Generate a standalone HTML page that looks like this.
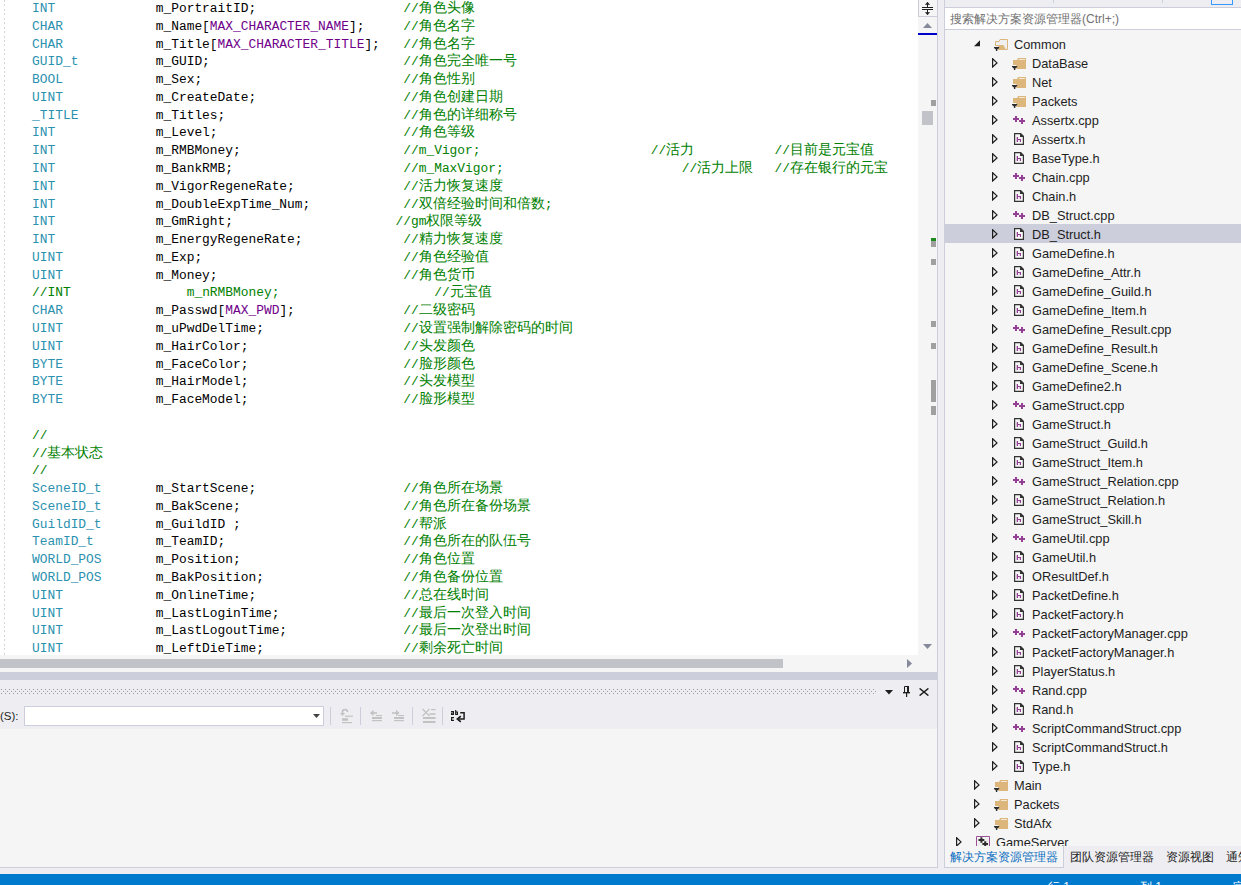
<!DOCTYPE html>
<html><head><meta charset="utf-8">
<style>
*{margin:0;padding:0;box-sizing:border-box}
html,body{width:1241px;height:885px;overflow:hidden;background:#EEEEF2;position:relative;font-family:"Liberation Sans",sans-serif}
.abs{position:absolute}
#editor{position:absolute;left:0;top:0;width:918px;height:655px;background:#fff;overflow:hidden}
#guide{position:absolute;left:4px;top:0;width:1px;height:655px;background:repeating-linear-gradient(to bottom,#D4D4D4 0,#D4D4D4 2px,transparent 2px,transparent 4.44px)}
.ln{position:absolute;left:0;height:0;width:918px}
.s{position:absolute;bottom:0;white-space:pre;font-family:"Liberation Mono",monospace;font-size:12.89px;line-height:0;color:#000}
.s i{font-style:normal}
.s b{font-weight:normal;font-size:14px}
.ic{position:absolute;display:block}
.tn{position:absolute;font-size:12.8px;line-height:20px;height:20px;white-space:pre;color:#1E1E1E}
</style></head><body>
<div id="editor">
<div id="guide"></div>
<div class="ln" style="top:9.00px"><span class="s" style="left:32.00px"><i style="color:#2B91AF">INT</i></span><span class="s" style="left:155.76px">m_PortraitID;</span><span class="s" style="left:403.28px"><i style="color:#008000">//<b>角色头像</b></i></span></div>
<div class="ln" style="top:26.78px"><span class="s" style="left:32.00px"><i style="color:#2B91AF">CHAR</i></span><span class="s" style="left:155.76px">m_Name[<i style="color:#6F008A">MAX_CHARACTER_NAME</i>];</span><span class="s" style="left:403.28px"><i style="color:#008000">//<b>角色名字</b></i></span></div>
<div class="ln" style="top:44.56px"><span class="s" style="left:32.00px"><i style="color:#2B91AF">CHAR</i></span><span class="s" style="left:155.76px">m_Title[<i style="color:#6F008A">MAX_CHARACTER_TITLE</i>];</span><span class="s" style="left:403.28px"><i style="color:#008000">//<b>角色名字</b></i></span></div>
<div class="ln" style="top:62.34px"><span class="s" style="left:32.00px"><i style="color:#2B91AF">GUID_t</i></span><span class="s" style="left:155.76px">m_GUID;</span><span class="s" style="left:403.28px"><i style="color:#008000">//<b>角色完全唯一号</b></i></span></div>
<div class="ln" style="top:80.12px"><span class="s" style="left:32.00px"><i style="color:#2B91AF">BOOL</i></span><span class="s" style="left:155.76px">m_Sex;</span><span class="s" style="left:403.28px"><i style="color:#008000">//<b>角色性别</b></i></span></div>
<div class="ln" style="top:97.90px"><span class="s" style="left:32.00px"><i style="color:#2B91AF">UINT</i></span><span class="s" style="left:155.76px">m_CreateDate;</span><span class="s" style="left:403.28px"><i style="color:#008000">//<b>角色创建日期</b></i></span></div>
<div class="ln" style="top:115.68px"><span class="s" style="left:32.00px"><i style="color:#2B91AF">_TITLE</i></span><span class="s" style="left:155.76px">m_Titles;</span><span class="s" style="left:403.28px"><i style="color:#008000">//<b>角色的详细称号</b></i></span></div>
<div class="ln" style="top:133.46px"><span class="s" style="left:32.00px"><i style="color:#2B91AF">INT</i></span><span class="s" style="left:155.76px">m_Level;</span><span class="s" style="left:403.28px"><i style="color:#008000">//<b>角色等级</b></i></span></div>
<div class="ln" style="top:151.24px"><span class="s" style="left:32.00px"><i style="color:#2B91AF">INT</i></span><span class="s" style="left:155.76px">m_RMBMoney;</span><span class="s" style="left:403.28px"><i style="color:#008000">//m_Vigor;</i></span><span class="s" style="left:650.80px"><i style="color:#008000">//<b>活力</b></i></span><span class="s" style="left:774.56px"><i style="color:#008000">//<b>目前是元宝值</b></i></span></div>
<div class="ln" style="top:169.02px"><span class="s" style="left:32.00px"><i style="color:#2B91AF">INT</i></span><span class="s" style="left:155.76px">m_BankRMB;</span><span class="s" style="left:403.28px"><i style="color:#008000">//m_MaxVigor;</i></span><span class="s" style="left:681.74px"><i style="color:#008000">//<b>活力上限</b></i></span><span class="s" style="left:774.56px"><i style="color:#008000">//<b>存在银行的元宝</b></i></span></div>
<div class="ln" style="top:186.80px"><span class="s" style="left:32.00px"><i style="color:#2B91AF">INT</i></span><span class="s" style="left:155.76px">m_VigorRegeneRate;</span><span class="s" style="left:403.28px"><i style="color:#008000">//<b>活力恢复速度</b></i></span></div>
<div class="ln" style="top:204.58px"><span class="s" style="left:32.00px"><i style="color:#2B91AF">INT</i></span><span class="s" style="left:155.76px">m_DoubleExpTime_Num;</span><span class="s" style="left:403.28px"><i style="color:#008000">//<b>双倍经验时间和倍数</b>;</i></span></div>
<div class="ln" style="top:222.36px"><span class="s" style="left:32.00px"><i style="color:#2B91AF">INT</i></span><span class="s" style="left:155.76px">m_GmRight;</span><span class="s" style="left:395.55px"><i style="color:#008000">//gm<b>权限等级</b></i></span></div>
<div class="ln" style="top:240.14px"><span class="s" style="left:32.00px"><i style="color:#2B91AF">INT</i></span><span class="s" style="left:155.76px">m_EnergyRegeneRate;</span><span class="s" style="left:403.28px"><i style="color:#008000">//<b>精力恢复速度</b></i></span></div>
<div class="ln" style="top:257.92px"><span class="s" style="left:32.00px"><i style="color:#2B91AF">UINT</i></span><span class="s" style="left:155.76px">m_Exp;</span><span class="s" style="left:403.28px"><i style="color:#008000">//<b>角色经验值</b></i></span></div>
<div class="ln" style="top:275.70px"><span class="s" style="left:32.00px"><i style="color:#2B91AF">UINT</i></span><span class="s" style="left:155.76px">m_Money;</span><span class="s" style="left:403.28px"><i style="color:#008000">//<b>角色货币</b></i></span></div>
<div class="ln" style="top:293.48px"><span class="s" style="left:32.00px"><i style="color:#008000">//INT</i></span><span class="s" style="left:186.70px"><i style="color:#008000">m_nRMBMoney;</i></span><span class="s" style="left:434.22px"><i style="color:#008000">//<b>元宝值</b></i></span></div>
<div class="ln" style="top:311.26px"><span class="s" style="left:32.00px"><i style="color:#2B91AF">CHAR</i></span><span class="s" style="left:155.76px">m_Passwd[<i style="color:#6F008A">MAX_PWD</i>];</span><span class="s" style="left:403.28px"><i style="color:#008000">//<b>二级密码</b></i></span></div>
<div class="ln" style="top:329.04px"><span class="s" style="left:32.00px"><i style="color:#2B91AF">UINT</i></span><span class="s" style="left:155.76px">m_uPwdDelTime;</span><span class="s" style="left:403.28px"><i style="color:#008000">//<b>设置强制解除密码的时间</b></i></span></div>
<div class="ln" style="top:346.82px"><span class="s" style="left:32.00px"><i style="color:#2B91AF">UINT</i></span><span class="s" style="left:155.76px">m_HairColor;</span><span class="s" style="left:403.28px"><i style="color:#008000">//<b>头发颜色</b></i></span></div>
<div class="ln" style="top:364.60px"><span class="s" style="left:32.00px"><i style="color:#2B91AF">BYTE</i></span><span class="s" style="left:155.76px">m_FaceColor;</span><span class="s" style="left:403.28px"><i style="color:#008000">//<b>脸形颜色</b></i></span></div>
<div class="ln" style="top:382.38px"><span class="s" style="left:32.00px"><i style="color:#2B91AF">BYTE</i></span><span class="s" style="left:155.76px">m_HairModel;</span><span class="s" style="left:403.28px"><i style="color:#008000">//<b>头发模型</b></i></span></div>
<div class="ln" style="top:400.16px"><span class="s" style="left:32.00px"><i style="color:#2B91AF">BYTE</i></span><span class="s" style="left:155.76px">m_FaceModel;</span><span class="s" style="left:403.28px"><i style="color:#008000">//<b>脸形模型</b></i></span></div>
<div class="ln" style="top:417.94px"></div>
<div class="ln" style="top:435.72px"><span class="s" style="left:32.00px"><i style="color:#008000">//</i></span></div>
<div class="ln" style="top:453.50px"><span class="s" style="left:32.00px"><i style="color:#008000">//<b>基本状态</b></i></span></div>
<div class="ln" style="top:471.28px"><span class="s" style="left:32.00px"><i style="color:#008000">//</i></span></div>
<div class="ln" style="top:489.06px"><span class="s" style="left:32.00px"><i style="color:#2B91AF">SceneID_t</i></span><span class="s" style="left:155.76px">m_StartScene;</span><span class="s" style="left:403.28px"><i style="color:#008000">//<b>角色所在场景</b></i></span></div>
<div class="ln" style="top:506.84px"><span class="s" style="left:32.00px"><i style="color:#2B91AF">SceneID_t</i></span><span class="s" style="left:155.76px">m_BakScene;</span><span class="s" style="left:403.28px"><i style="color:#008000">//<b>角色所在备份场景</b></i></span></div>
<div class="ln" style="top:524.62px"><span class="s" style="left:32.00px"><i style="color:#2B91AF">GuildID_t</i></span><span class="s" style="left:155.76px">m_GuildID ;</span><span class="s" style="left:403.28px"><i style="color:#008000">//<b>帮派</b></i></span></div>
<div class="ln" style="top:542.40px"><span class="s" style="left:32.00px"><i style="color:#2B91AF">TeamID_t</i></span><span class="s" style="left:155.76px">m_TeamID;</span><span class="s" style="left:403.28px"><i style="color:#008000">//<b>角色所在的队伍号</b></i></span></div>
<div class="ln" style="top:560.18px"><span class="s" style="left:32.00px"><i style="color:#2B91AF">WORLD_POS</i></span><span class="s" style="left:155.76px">m_Position;</span><span class="s" style="left:403.28px"><i style="color:#008000">//<b>角色位置</b></i></span></div>
<div class="ln" style="top:577.96px"><span class="s" style="left:32.00px"><i style="color:#2B91AF">WORLD_POS</i></span><span class="s" style="left:155.76px">m_BakPosition;</span><span class="s" style="left:403.28px"><i style="color:#008000">//<b>角色备份位置</b></i></span></div>
<div class="ln" style="top:595.74px"><span class="s" style="left:32.00px"><i style="color:#2B91AF">UINT</i></span><span class="s" style="left:155.76px">m_OnlineTime;</span><span class="s" style="left:403.28px"><i style="color:#008000">//<b>总在线时间</b></i></span></div>
<div class="ln" style="top:613.52px"><span class="s" style="left:32.00px"><i style="color:#2B91AF">UINT</i></span><span class="s" style="left:155.76px">m_LastLoginTime;</span><span class="s" style="left:403.28px"><i style="color:#008000">//<b>最后一次登入时间</b></i></span></div>
<div class="ln" style="top:631.30px"><span class="s" style="left:32.00px"><i style="color:#2B91AF">UINT</i></span><span class="s" style="left:155.76px">m_LastLogoutTime;</span><span class="s" style="left:403.28px"><i style="color:#008000">//<b>最后一次登出时间</b></i></span></div>
<div class="ln" style="top:649.08px"><span class="s" style="left:32.00px"><i style="color:#2B91AF">UINT</i></span><span class="s" style="left:155.76px">m_LeftDieTime;</span><span class="s" style="left:403.28px"><i style="color:#008000">//<b>剩余死亡时间</b></i></span></div>
</div>
<!-- vertical scrollbar column -->
<div class="abs" style="left:918px;top:0;width:19px;height:672px;background:#F5F5F5"></div>
<div class="abs" style="left:937px;top:0;width:1px;height:868px;background:#CCCEDB"></div>
<div class="abs" style="left:918px;top:0;width:19px;height:17px;border-left:1px solid #CCCEDB;border-bottom:1px solid #CCCEDB;background:#F5F5F5"></div>
<svg class="ic" style="left:921px;top:1px" width="13" height="15" viewBox="0 0 13 15"><path d="M1 6.5h11M1 8.5h11" stroke="#1E1E1E" stroke-width="1"/><path d="M6.5 1.5v5M6.5 8.5v5" stroke="#1E1E1E" stroke-width="1"/><path d="M4.5 3.5L6.5 1.2L8.5 3.5z M4.5 11.5L6.5 13.8L8.5 11.5z" fill="#1E1E1E" stroke="#1E1E1E" stroke-width="0.6"/></svg>
<svg class="ic" style="left:923px;top:23px" width="9" height="5" viewBox="0 0 9 5"><path d="M0 5L4.5 0L9 5z" fill="#868999"/></svg>
<div class="abs" style="left:918px;top:33px;width:19px;height:2px;background:#0000CD"></div>
<!-- marks -->
<div class="abs" style="left:931px;top:100px;width:5px;height:6px;background:#A0A0A0"></div>
<div class="abs" style="left:922px;top:111px;width:11px;height:14px;background:#C2C3C9"></div>
<div class="abs" style="left:931px;top:238px;width:5px;height:3px;background:#1D8A1D"></div>
<div class="abs" style="left:931px;top:241px;width:5px;height:6px;background:#A0A0A0"></div>
<div class="abs" style="left:931px;top:259px;width:5px;height:6px;background:#A0A0A0"></div>
<div class="abs" style="left:931px;top:321px;width:5px;height:6px;background:#A0A0A0"></div>
<div class="abs" style="left:931px;top:343px;width:5px;height:6px;background:#A0A0A0"></div>
<div class="abs" style="left:931px;top:380px;width:5px;height:22px;background:#A0A0A0"></div>
<div class="abs" style="left:931px;top:406px;width:5px;height:9px;background:#A0A0A0"></div>
<svg class="ic" style="left:923px;top:644px" width="9" height="5" viewBox="0 0 9 5"><path d="M0 0H9L4.5 5z" fill="#868999"/></svg>
<!-- horizontal scrollbar -->
<div class="abs" style="left:0;top:655px;width:918px;height:17px;background:#F5F5F5"></div>
<div class="abs" style="left:0;top:659px;width:783px;height:9px;background:#C2C3C9"></div>
<svg class="ic" style="left:907px;top:659px" width="5" height="9" viewBox="0 0 5 9"><path d="M0 0L5 4.5L0 9z" fill="#868999"/></svg>
<!-- output window -->
<div class="abs" style="left:0;top:672px;width:937px;height:8px;background:#CCCEDB"></div>
<div class="abs" style="left:0;top:680px;width:937px;height:49px;background:#EEEEF2"></div>
<svg class="ic" style="left:0;top:689px" width="876" height="5"><defs><pattern id="dp" width="4" height="4" patternUnits="userSpaceOnUse"><rect x="1" y="0" width="1" height="1" fill="#999"/><rect x="3" y="2" width="1" height="1" fill="#999"/></pattern></defs><rect width="876" height="5" fill="url(#dp)"/></svg>
<svg class="ic" style="left:885px;top:690px" width="8" height="5" viewBox="0 0 8 5"><path d="M0 0H8L4 4.5z" fill="#1E1E1E"/></svg>
<svg class="ic" style="left:903px;top:686px" width="8" height="11" viewBox="0 0 8 11"><path d="M1.5 0.5H5.5M1.5 0.5V6.5" fill="none" stroke="#1E1E1E" stroke-width="1"/><rect x="4" y="0" width="2" height="6.5" fill="#1E1E1E"/><rect x="0" y="6" width="7" height="1.4" fill="#1E1E1E"/><rect x="3" y="7" width="1.2" height="4" fill="#1E1E1E"/></svg>
<svg class="ic" style="left:919px;top:688px" width="10" height="8" viewBox="0 0 10 8"><path d="M0.6 0.4L9.4 7.6M9.4 0.4L0.6 7.6" stroke="#1E1E1E" stroke-width="1.4"/></svg>
<div class="abs" style="left:0;top:708px;font-size:11.5px;line-height:16px;color:#1E1E1E">(S):</div>
<div class="abs" style="left:24px;top:706px;width:300px;height:20px;background:#fff;border:1px solid #CCCEDB"></div>
<svg class="ic" style="left:313px;top:714px" width="7" height="4" viewBox="0 0 7 4"><path d="M0 0H7L3.5 4z" fill="#424242"/></svg>
<div class="abs" style="left:330px;top:707px;width:1px;height:18px;background:#CCCEDB"></div>
<div class="abs" style="left:360px;top:707px;width:1px;height:18px;background:#CCCEDB"></div>
<div class="abs" style="left:412px;top:707px;width:1px;height:18px;background:#CCCEDB"></div>
<div class="abs" style="left:442px;top:707px;width:1px;height:18px;background:#CCCEDB"></div>
<svg class="ic" style="left:336px;top:704px" width="20" height="22" viewBox="0 0 20 22"><path d="M6.5 9.5V8a2.5 2.5 0 0 1 5 0" fill="none" stroke="#C2C2C2" stroke-width="1.6"/><path d="M4 9L6.5 12L9 9Z" fill="#C2C2C2"/><rect x="9" y="11.6" width="8" height="1.2" fill="#C2C2C2"/><rect x="6" y="14.2" width="6" height="2.6" fill="#C2C2C2"/><rect x="6" y="18" width="10" height="1.2" fill="#C2C2C2"/></svg><svg class="ic" style="left:369px;top:709px" width="14" height="13" viewBox="0 0 14 13"><path d="M1 4L4.5 0.8V7.2Z" fill="#C2C2C2"/><rect x="3" y="3.2" width="5" height="1.6" fill="#C2C2C2"/><rect x="7" y="6" width="6" height="1.1" fill="#C2C2C2"/><rect x="3" y="8" width="10" height="2" fill="#C2C2C2"/><rect x="3" y="11" width="10" height="1.2" fill="#C2C2C2"/></svg><svg class="ic" style="left:391px;top:709px" width="14" height="13" viewBox="0 0 14 13"><path d="M8.5 4L5 0.8V7.2Z" fill="#C2C2C2"/><rect x="1" y="3.2" width="5" height="1.6" fill="#C2C2C2"/><rect x="7" y="6" width="6" height="1.1" fill="#C2C2C2"/><rect x="3" y="8" width="10" height="2" fill="#C2C2C2"/><rect x="3" y="11" width="10" height="1.2" fill="#C2C2C2"/></svg><svg class="ic" style="left:422px;top:708px" width="14" height="16" viewBox="0 0 14 16"><path d="M0.5 1L7.5 8M7.5 1L0.5 8" stroke="#C2C2C2" stroke-width="1.2"/><rect x="9" y="1" width="4.5" height="1.2" fill="#C2C2C2"/><rect x="7.5" y="5.2" width="6" height="1.6" fill="#C2C2C2"/><rect x="1" y="9" width="12.5" height="2" fill="#C2C2C2"/><rect x="1" y="13" width="12.5" height="2" fill="#C2C2C2"/></svg><svg class="ic" style="left:450px;top:709px" width="17" height="14" viewBox="0 0 17 14"><path d="M1 2.5H3.4V5.5H1.6V4H3.4" fill="none" stroke="#1E1E1E" stroke-width="1.2"/><path d="M5.7 1V5.5H7.4V3H5.7" fill="none" stroke="#1E1E1E" stroke-width="1.2"/><path d="M4 8.6H1.6V11.4H4" fill="none" stroke="#1E1E1E" stroke-width="1.2"/><path d="M10.2 3.7H14.1V10H9" fill="none" stroke="#1E1E1E" stroke-width="1.5"/><path d="M10.8 7.2L7.4 10L10.8 12.8" fill="none" stroke="#1E1E1E" stroke-width="1.7"/></svg>
<div class="abs" style="left:0;top:729px;width:937px;height:139px;background:#F5F5F5;border-bottom:1px solid #CCCEDB"></div>
<!-- status bar -->
<div class="abs" style="left:0;top:874px;width:1241px;height:11px;background:#007ACC;overflow:hidden">
<div class="abs" style="left:1048px;top:6px;font-size:12px;line-height:14px;color:#fff;white-space:pre">行 1</div>
<div class="abs" style="left:1140px;top:6px;font-size:12px;line-height:14px;color:#fff;white-space:pre">列 1</div>
<div class="abs" style="left:1233px;top:6px;font-size:12px;line-height:14px;color:#fff;white-space:pre">字符 1</div>
</div>
<!-- solution explorer -->
<div class="abs" style="left:944px;top:0;width:297px;height:868px;background:#F5F5F5;border-left:1px solid #CCCEDB;overflow:hidden">
<div class="abs" style="left:0;top:0;width:297px;height:7px;background:#EEEEF2"></div>
<div class="abs" style="left:108px;top:0;width:1px;height:3px;background:#CCCEDB"></div>
<div class="abs" style="left:217px;top:0;width:1px;height:3px;background:#CCCEDB"></div>
<div class="abs" style="left:266px;top:-2px;width:22px;height:7px;border:1px solid #3399FF;background:#EEEEF2"></div>
<div class="abs" style="left:0;top:7px;width:297px;height:23px;background:#fff;border-top:1px solid #CCCEDB;border-bottom:1px solid #CCCEDB"></div>
<div class="abs" style="left:5px;top:11px;font-size:12px;line-height:17px;color:#717171;white-space:pre">搜索解决方案资源管理器(Ctrl+;)</div>
</div>
<div class="abs" style="left:945px;top:30px;width:296px;height:816px;overflow:hidden">
<div class="abs" style="left:-945px;top:-30px;width:1241px;height:885px">
<svg class="ic" style="left:974px;top:40px" width="7" height="7" viewBox="0 0 7 7"><path d="M6 0.3V6.3H0z" fill="#1E1E1E"/></svg>
<svg class="ic" style="left:994px;top:38px" width="15" height="14" viewBox="0 0 15 14"><path d="M1.5 7.5V3.5H5L6 1.5H13.5V11.5H4" fill="#EFEFEF" stroke="#DCB67A" stroke-width="1"/><path d="M1 7H9.5L12 12H4.3V8H1Z" fill="#DCB67A"/><path d="M0 9H5.2V10L3.3 11.6V13H1.9V11.6L0 10Z" fill="#2D2D2D"/></svg>
<div class="tn" style="left:1014px;top:35px">Common</div>
<svg class="ic" style="left:992px;top:58px" width="6" height="10" viewBox="0 0 6 10"><path d="M0.6 0.8L5 4.9L0.6 9z" fill="none" stroke="#1E1E1E" stroke-width="1.2"/></svg>
<svg class="ic" style="left:1012px;top:57px" width="15" height="13" viewBox="0 0 15 13"><path d="M1 3H5.2L6 1H14V12H4.3V8H1Z" fill="#DCB67A"/><path d="M7 2H13V3H7Z" fill="#F3E9D6"/><path d="M0 9H5.2V10L3.3 11.6V13H1.9V11.6L0 10Z" fill="#2D2D2D"/></svg>
<div class="tn" style="left:1032px;top:54px">DataBase</div>
<svg class="ic" style="left:992px;top:77px" width="6" height="10" viewBox="0 0 6 10"><path d="M0.6 0.8L5 4.9L0.6 9z" fill="none" stroke="#1E1E1E" stroke-width="1.2"/></svg>
<svg class="ic" style="left:1012px;top:76px" width="15" height="13" viewBox="0 0 15 13"><path d="M1 3H5.2L6 1H14V12H4.3V8H1Z" fill="#DCB67A"/><path d="M7 2H13V3H7Z" fill="#F3E9D6"/><path d="M0 9H5.2V10L3.3 11.6V13H1.9V11.6L0 10Z" fill="#2D2D2D"/></svg>
<div class="tn" style="left:1032px;top:73px">Net</div>
<svg class="ic" style="left:992px;top:96px" width="6" height="10" viewBox="0 0 6 10"><path d="M0.6 0.8L5 4.9L0.6 9z" fill="none" stroke="#1E1E1E" stroke-width="1.2"/></svg>
<svg class="ic" style="left:1012px;top:95px" width="15" height="13" viewBox="0 0 15 13"><path d="M1 3H5.2L6 1H14V12H4.3V8H1Z" fill="#DCB67A"/><path d="M7 2H13V3H7Z" fill="#F3E9D6"/><path d="M0 9H5.2V10L3.3 11.6V13H1.9V11.6L0 10Z" fill="#2D2D2D"/></svg>
<div class="tn" style="left:1032px;top:92px">Packets</div>
<svg class="ic" style="left:992px;top:115px" width="6" height="10" viewBox="0 0 6 10"><path d="M0.6 0.8L5 4.9L0.6 9z" fill="none" stroke="#1E1E1E" stroke-width="1.2"/></svg>
<svg class="ic" style="left:1013px;top:116px" width="13" height="9" viewBox="0 0 13 9"><path d="M2 0H4V2H6V4H4V6H2V4H0V2H2Z" fill="#943F93"/><path d="M8 2H10V4H12V6H10V8H8V6H6V4H8Z" fill="#943F93"/></svg>
<div class="tn" style="left:1032px;top:111px">Assertx.cpp</div>
<svg class="ic" style="left:992px;top:134px" width="6" height="10" viewBox="0 0 6 10"><path d="M0.6 0.8L5 4.9L0.6 9z" fill="none" stroke="#1E1E1E" stroke-width="1.2"/></svg>
<svg class="ic" style="left:1014px;top:133px" width="10" height="12" viewBox="0 0 10 12"><path d="M0.6 0.6H6.4L9.4 3.6V11.4H0.6Z" fill="#F5F5F5" stroke="#333" stroke-width="1.2"/><path d="M6 0H6.8L10 3.2V4H6Z" fill="#333"/><path d="M2.7 4H4V5.9H7V9H5.8V7H4V9H2.7Z" fill="#943F93"/></svg>
<div class="tn" style="left:1032px;top:130px">Assertx.h</div>
<svg class="ic" style="left:992px;top:153px" width="6" height="10" viewBox="0 0 6 10"><path d="M0.6 0.8L5 4.9L0.6 9z" fill="none" stroke="#1E1E1E" stroke-width="1.2"/></svg>
<svg class="ic" style="left:1014px;top:152px" width="10" height="12" viewBox="0 0 10 12"><path d="M0.6 0.6H6.4L9.4 3.6V11.4H0.6Z" fill="#F5F5F5" stroke="#333" stroke-width="1.2"/><path d="M6 0H6.8L10 3.2V4H6Z" fill="#333"/><path d="M2.7 4H4V5.9H7V9H5.8V7H4V9H2.7Z" fill="#943F93"/></svg>
<div class="tn" style="left:1032px;top:149px">BaseType.h</div>
<svg class="ic" style="left:992px;top:172px" width="6" height="10" viewBox="0 0 6 10"><path d="M0.6 0.8L5 4.9L0.6 9z" fill="none" stroke="#1E1E1E" stroke-width="1.2"/></svg>
<svg class="ic" style="left:1013px;top:173px" width="13" height="9" viewBox="0 0 13 9"><path d="M2 0H4V2H6V4H4V6H2V4H0V2H2Z" fill="#943F93"/><path d="M8 2H10V4H12V6H10V8H8V6H6V4H8Z" fill="#943F93"/></svg>
<div class="tn" style="left:1032px;top:168px">Chain.cpp</div>
<svg class="ic" style="left:992px;top:191px" width="6" height="10" viewBox="0 0 6 10"><path d="M0.6 0.8L5 4.9L0.6 9z" fill="none" stroke="#1E1E1E" stroke-width="1.2"/></svg>
<svg class="ic" style="left:1014px;top:190px" width="10" height="12" viewBox="0 0 10 12"><path d="M0.6 0.6H6.4L9.4 3.6V11.4H0.6Z" fill="#F5F5F5" stroke="#333" stroke-width="1.2"/><path d="M6 0H6.8L10 3.2V4H6Z" fill="#333"/><path d="M2.7 4H4V5.9H7V9H5.8V7H4V9H2.7Z" fill="#943F93"/></svg>
<div class="tn" style="left:1032px;top:187px">Chain.h</div>
<svg class="ic" style="left:992px;top:210px" width="6" height="10" viewBox="0 0 6 10"><path d="M0.6 0.8L5 4.9L0.6 9z" fill="none" stroke="#1E1E1E" stroke-width="1.2"/></svg>
<svg class="ic" style="left:1013px;top:211px" width="13" height="9" viewBox="0 0 13 9"><path d="M2 0H4V2H6V4H4V6H2V4H0V2H2Z" fill="#943F93"/><path d="M8 2H10V4H12V6H10V8H8V6H6V4H8Z" fill="#943F93"/></svg>
<div class="tn" style="left:1032px;top:206px">DB_Struct.cpp</div>
<div style="position:absolute;left:945px;top:224px;width:296px;height:19px;background:#CCCEDB"></div>
<svg class="ic" style="left:992px;top:229px" width="6" height="10" viewBox="0 0 6 10"><path d="M0.6 0.8L5 4.9L0.6 9z" fill="none" stroke="#1E1E1E" stroke-width="1.2"/></svg>
<svg class="ic" style="left:1014px;top:228px" width="10" height="12" viewBox="0 0 10 12"><path d="M0.6 0.6H6.4L9.4 3.6V11.4H0.6Z" fill="#FFFFFF" stroke="#333" stroke-width="1.2"/><path d="M6 0H6.8L10 3.2V4H6Z" fill="#333"/><path d="M2.7 4H4V5.9H7V9H5.8V7H4V9H2.7Z" fill="#943F93"/></svg>
<div class="tn" style="left:1032px;top:225px">DB_Struct.h</div>
<svg class="ic" style="left:992px;top:248px" width="6" height="10" viewBox="0 0 6 10"><path d="M0.6 0.8L5 4.9L0.6 9z" fill="none" stroke="#1E1E1E" stroke-width="1.2"/></svg>
<svg class="ic" style="left:1014px;top:247px" width="10" height="12" viewBox="0 0 10 12"><path d="M0.6 0.6H6.4L9.4 3.6V11.4H0.6Z" fill="#F5F5F5" stroke="#333" stroke-width="1.2"/><path d="M6 0H6.8L10 3.2V4H6Z" fill="#333"/><path d="M2.7 4H4V5.9H7V9H5.8V7H4V9H2.7Z" fill="#943F93"/></svg>
<div class="tn" style="left:1032px;top:244px">GameDefine.h</div>
<svg class="ic" style="left:992px;top:267px" width="6" height="10" viewBox="0 0 6 10"><path d="M0.6 0.8L5 4.9L0.6 9z" fill="none" stroke="#1E1E1E" stroke-width="1.2"/></svg>
<svg class="ic" style="left:1014px;top:266px" width="10" height="12" viewBox="0 0 10 12"><path d="M0.6 0.6H6.4L9.4 3.6V11.4H0.6Z" fill="#F5F5F5" stroke="#333" stroke-width="1.2"/><path d="M6 0H6.8L10 3.2V4H6Z" fill="#333"/><path d="M2.7 4H4V5.9H7V9H5.8V7H4V9H2.7Z" fill="#943F93"/></svg>
<div class="tn" style="left:1032px;top:263px">GameDefine_Attr.h</div>
<svg class="ic" style="left:992px;top:286px" width="6" height="10" viewBox="0 0 6 10"><path d="M0.6 0.8L5 4.9L0.6 9z" fill="none" stroke="#1E1E1E" stroke-width="1.2"/></svg>
<svg class="ic" style="left:1014px;top:285px" width="10" height="12" viewBox="0 0 10 12"><path d="M0.6 0.6H6.4L9.4 3.6V11.4H0.6Z" fill="#F5F5F5" stroke="#333" stroke-width="1.2"/><path d="M6 0H6.8L10 3.2V4H6Z" fill="#333"/><path d="M2.7 4H4V5.9H7V9H5.8V7H4V9H2.7Z" fill="#943F93"/></svg>
<div class="tn" style="left:1032px;top:282px">GameDefine_Guild.h</div>
<svg class="ic" style="left:992px;top:305px" width="6" height="10" viewBox="0 0 6 10"><path d="M0.6 0.8L5 4.9L0.6 9z" fill="none" stroke="#1E1E1E" stroke-width="1.2"/></svg>
<svg class="ic" style="left:1014px;top:304px" width="10" height="12" viewBox="0 0 10 12"><path d="M0.6 0.6H6.4L9.4 3.6V11.4H0.6Z" fill="#F5F5F5" stroke="#333" stroke-width="1.2"/><path d="M6 0H6.8L10 3.2V4H6Z" fill="#333"/><path d="M2.7 4H4V5.9H7V9H5.8V7H4V9H2.7Z" fill="#943F93"/></svg>
<div class="tn" style="left:1032px;top:301px">GameDefine_Item.h</div>
<svg class="ic" style="left:992px;top:324px" width="6" height="10" viewBox="0 0 6 10"><path d="M0.6 0.8L5 4.9L0.6 9z" fill="none" stroke="#1E1E1E" stroke-width="1.2"/></svg>
<svg class="ic" style="left:1013px;top:325px" width="13" height="9" viewBox="0 0 13 9"><path d="M2 0H4V2H6V4H4V6H2V4H0V2H2Z" fill="#943F93"/><path d="M8 2H10V4H12V6H10V8H8V6H6V4H8Z" fill="#943F93"/></svg>
<div class="tn" style="left:1032px;top:320px">GameDefine_Result.cpp</div>
<svg class="ic" style="left:992px;top:343px" width="6" height="10" viewBox="0 0 6 10"><path d="M0.6 0.8L5 4.9L0.6 9z" fill="none" stroke="#1E1E1E" stroke-width="1.2"/></svg>
<svg class="ic" style="left:1014px;top:342px" width="10" height="12" viewBox="0 0 10 12"><path d="M0.6 0.6H6.4L9.4 3.6V11.4H0.6Z" fill="#F5F5F5" stroke="#333" stroke-width="1.2"/><path d="M6 0H6.8L10 3.2V4H6Z" fill="#333"/><path d="M2.7 4H4V5.9H7V9H5.8V7H4V9H2.7Z" fill="#943F93"/></svg>
<div class="tn" style="left:1032px;top:339px">GameDefine_Result.h</div>
<svg class="ic" style="left:992px;top:362px" width="6" height="10" viewBox="0 0 6 10"><path d="M0.6 0.8L5 4.9L0.6 9z" fill="none" stroke="#1E1E1E" stroke-width="1.2"/></svg>
<svg class="ic" style="left:1014px;top:361px" width="10" height="12" viewBox="0 0 10 12"><path d="M0.6 0.6H6.4L9.4 3.6V11.4H0.6Z" fill="#F5F5F5" stroke="#333" stroke-width="1.2"/><path d="M6 0H6.8L10 3.2V4H6Z" fill="#333"/><path d="M2.7 4H4V5.9H7V9H5.8V7H4V9H2.7Z" fill="#943F93"/></svg>
<div class="tn" style="left:1032px;top:358px">GameDefine_Scene.h</div>
<svg class="ic" style="left:992px;top:381px" width="6" height="10" viewBox="0 0 6 10"><path d="M0.6 0.8L5 4.9L0.6 9z" fill="none" stroke="#1E1E1E" stroke-width="1.2"/></svg>
<svg class="ic" style="left:1014px;top:380px" width="10" height="12" viewBox="0 0 10 12"><path d="M0.6 0.6H6.4L9.4 3.6V11.4H0.6Z" fill="#F5F5F5" stroke="#333" stroke-width="1.2"/><path d="M6 0H6.8L10 3.2V4H6Z" fill="#333"/><path d="M2.7 4H4V5.9H7V9H5.8V7H4V9H2.7Z" fill="#943F93"/></svg>
<div class="tn" style="left:1032px;top:377px">GameDefine2.h</div>
<svg class="ic" style="left:992px;top:400px" width="6" height="10" viewBox="0 0 6 10"><path d="M0.6 0.8L5 4.9L0.6 9z" fill="none" stroke="#1E1E1E" stroke-width="1.2"/></svg>
<svg class="ic" style="left:1013px;top:401px" width="13" height="9" viewBox="0 0 13 9"><path d="M2 0H4V2H6V4H4V6H2V4H0V2H2Z" fill="#943F93"/><path d="M8 2H10V4H12V6H10V8H8V6H6V4H8Z" fill="#943F93"/></svg>
<div class="tn" style="left:1032px;top:396px">GameStruct.cpp</div>
<svg class="ic" style="left:992px;top:419px" width="6" height="10" viewBox="0 0 6 10"><path d="M0.6 0.8L5 4.9L0.6 9z" fill="none" stroke="#1E1E1E" stroke-width="1.2"/></svg>
<svg class="ic" style="left:1014px;top:418px" width="10" height="12" viewBox="0 0 10 12"><path d="M0.6 0.6H6.4L9.4 3.6V11.4H0.6Z" fill="#F5F5F5" stroke="#333" stroke-width="1.2"/><path d="M6 0H6.8L10 3.2V4H6Z" fill="#333"/><path d="M2.7 4H4V5.9H7V9H5.8V7H4V9H2.7Z" fill="#943F93"/></svg>
<div class="tn" style="left:1032px;top:415px">GameStruct.h</div>
<svg class="ic" style="left:992px;top:438px" width="6" height="10" viewBox="0 0 6 10"><path d="M0.6 0.8L5 4.9L0.6 9z" fill="none" stroke="#1E1E1E" stroke-width="1.2"/></svg>
<svg class="ic" style="left:1014px;top:437px" width="10" height="12" viewBox="0 0 10 12"><path d="M0.6 0.6H6.4L9.4 3.6V11.4H0.6Z" fill="#F5F5F5" stroke="#333" stroke-width="1.2"/><path d="M6 0H6.8L10 3.2V4H6Z" fill="#333"/><path d="M2.7 4H4V5.9H7V9H5.8V7H4V9H2.7Z" fill="#943F93"/></svg>
<div class="tn" style="left:1032px;top:434px">GameStruct_Guild.h</div>
<svg class="ic" style="left:992px;top:457px" width="6" height="10" viewBox="0 0 6 10"><path d="M0.6 0.8L5 4.9L0.6 9z" fill="none" stroke="#1E1E1E" stroke-width="1.2"/></svg>
<svg class="ic" style="left:1014px;top:456px" width="10" height="12" viewBox="0 0 10 12"><path d="M0.6 0.6H6.4L9.4 3.6V11.4H0.6Z" fill="#F5F5F5" stroke="#333" stroke-width="1.2"/><path d="M6 0H6.8L10 3.2V4H6Z" fill="#333"/><path d="M2.7 4H4V5.9H7V9H5.8V7H4V9H2.7Z" fill="#943F93"/></svg>
<div class="tn" style="left:1032px;top:453px">GameStruct_Item.h</div>
<svg class="ic" style="left:992px;top:476px" width="6" height="10" viewBox="0 0 6 10"><path d="M0.6 0.8L5 4.9L0.6 9z" fill="none" stroke="#1E1E1E" stroke-width="1.2"/></svg>
<svg class="ic" style="left:1013px;top:477px" width="13" height="9" viewBox="0 0 13 9"><path d="M2 0H4V2H6V4H4V6H2V4H0V2H2Z" fill="#943F93"/><path d="M8 2H10V4H12V6H10V8H8V6H6V4H8Z" fill="#943F93"/></svg>
<div class="tn" style="left:1032px;top:472px">GameStruct_Relation.cpp</div>
<svg class="ic" style="left:992px;top:495px" width="6" height="10" viewBox="0 0 6 10"><path d="M0.6 0.8L5 4.9L0.6 9z" fill="none" stroke="#1E1E1E" stroke-width="1.2"/></svg>
<svg class="ic" style="left:1014px;top:494px" width="10" height="12" viewBox="0 0 10 12"><path d="M0.6 0.6H6.4L9.4 3.6V11.4H0.6Z" fill="#F5F5F5" stroke="#333" stroke-width="1.2"/><path d="M6 0H6.8L10 3.2V4H6Z" fill="#333"/><path d="M2.7 4H4V5.9H7V9H5.8V7H4V9H2.7Z" fill="#943F93"/></svg>
<div class="tn" style="left:1032px;top:491px">GameStruct_Relation.h</div>
<svg class="ic" style="left:992px;top:514px" width="6" height="10" viewBox="0 0 6 10"><path d="M0.6 0.8L5 4.9L0.6 9z" fill="none" stroke="#1E1E1E" stroke-width="1.2"/></svg>
<svg class="ic" style="left:1014px;top:513px" width="10" height="12" viewBox="0 0 10 12"><path d="M0.6 0.6H6.4L9.4 3.6V11.4H0.6Z" fill="#F5F5F5" stroke="#333" stroke-width="1.2"/><path d="M6 0H6.8L10 3.2V4H6Z" fill="#333"/><path d="M2.7 4H4V5.9H7V9H5.8V7H4V9H2.7Z" fill="#943F93"/></svg>
<div class="tn" style="left:1032px;top:510px">GameStruct_Skill.h</div>
<svg class="ic" style="left:992px;top:533px" width="6" height="10" viewBox="0 0 6 10"><path d="M0.6 0.8L5 4.9L0.6 9z" fill="none" stroke="#1E1E1E" stroke-width="1.2"/></svg>
<svg class="ic" style="left:1013px;top:534px" width="13" height="9" viewBox="0 0 13 9"><path d="M2 0H4V2H6V4H4V6H2V4H0V2H2Z" fill="#943F93"/><path d="M8 2H10V4H12V6H10V8H8V6H6V4H8Z" fill="#943F93"/></svg>
<div class="tn" style="left:1032px;top:529px">GameUtil.cpp</div>
<svg class="ic" style="left:992px;top:552px" width="6" height="10" viewBox="0 0 6 10"><path d="M0.6 0.8L5 4.9L0.6 9z" fill="none" stroke="#1E1E1E" stroke-width="1.2"/></svg>
<svg class="ic" style="left:1014px;top:551px" width="10" height="12" viewBox="0 0 10 12"><path d="M0.6 0.6H6.4L9.4 3.6V11.4H0.6Z" fill="#F5F5F5" stroke="#333" stroke-width="1.2"/><path d="M6 0H6.8L10 3.2V4H6Z" fill="#333"/><path d="M2.7 4H4V5.9H7V9H5.8V7H4V9H2.7Z" fill="#943F93"/></svg>
<div class="tn" style="left:1032px;top:548px">GameUtil.h</div>
<svg class="ic" style="left:992px;top:571px" width="6" height="10" viewBox="0 0 6 10"><path d="M0.6 0.8L5 4.9L0.6 9z" fill="none" stroke="#1E1E1E" stroke-width="1.2"/></svg>
<svg class="ic" style="left:1014px;top:570px" width="10" height="12" viewBox="0 0 10 12"><path d="M0.6 0.6H6.4L9.4 3.6V11.4H0.6Z" fill="#F5F5F5" stroke="#333" stroke-width="1.2"/><path d="M6 0H6.8L10 3.2V4H6Z" fill="#333"/><path d="M2.7 4H4V5.9H7V9H5.8V7H4V9H2.7Z" fill="#943F93"/></svg>
<div class="tn" style="left:1032px;top:567px">OResultDef.h</div>
<svg class="ic" style="left:992px;top:590px" width="6" height="10" viewBox="0 0 6 10"><path d="M0.6 0.8L5 4.9L0.6 9z" fill="none" stroke="#1E1E1E" stroke-width="1.2"/></svg>
<svg class="ic" style="left:1014px;top:589px" width="10" height="12" viewBox="0 0 10 12"><path d="M0.6 0.6H6.4L9.4 3.6V11.4H0.6Z" fill="#F5F5F5" stroke="#333" stroke-width="1.2"/><path d="M6 0H6.8L10 3.2V4H6Z" fill="#333"/><path d="M2.7 4H4V5.9H7V9H5.8V7H4V9H2.7Z" fill="#943F93"/></svg>
<div class="tn" style="left:1032px;top:586px">PacketDefine.h</div>
<svg class="ic" style="left:992px;top:609px" width="6" height="10" viewBox="0 0 6 10"><path d="M0.6 0.8L5 4.9L0.6 9z" fill="none" stroke="#1E1E1E" stroke-width="1.2"/></svg>
<svg class="ic" style="left:1014px;top:608px" width="10" height="12" viewBox="0 0 10 12"><path d="M0.6 0.6H6.4L9.4 3.6V11.4H0.6Z" fill="#F5F5F5" stroke="#333" stroke-width="1.2"/><path d="M6 0H6.8L10 3.2V4H6Z" fill="#333"/><path d="M2.7 4H4V5.9H7V9H5.8V7H4V9H2.7Z" fill="#943F93"/></svg>
<div class="tn" style="left:1032px;top:605px">PacketFactory.h</div>
<svg class="ic" style="left:992px;top:628px" width="6" height="10" viewBox="0 0 6 10"><path d="M0.6 0.8L5 4.9L0.6 9z" fill="none" stroke="#1E1E1E" stroke-width="1.2"/></svg>
<svg class="ic" style="left:1013px;top:629px" width="13" height="9" viewBox="0 0 13 9"><path d="M2 0H4V2H6V4H4V6H2V4H0V2H2Z" fill="#943F93"/><path d="M8 2H10V4H12V6H10V8H8V6H6V4H8Z" fill="#943F93"/></svg>
<div class="tn" style="left:1032px;top:624px">PacketFactoryManager.cpp</div>
<svg class="ic" style="left:992px;top:647px" width="6" height="10" viewBox="0 0 6 10"><path d="M0.6 0.8L5 4.9L0.6 9z" fill="none" stroke="#1E1E1E" stroke-width="1.2"/></svg>
<svg class="ic" style="left:1014px;top:646px" width="10" height="12" viewBox="0 0 10 12"><path d="M0.6 0.6H6.4L9.4 3.6V11.4H0.6Z" fill="#F5F5F5" stroke="#333" stroke-width="1.2"/><path d="M6 0H6.8L10 3.2V4H6Z" fill="#333"/><path d="M2.7 4H4V5.9H7V9H5.8V7H4V9H2.7Z" fill="#943F93"/></svg>
<div class="tn" style="left:1032px;top:643px">PacketFactoryManager.h</div>
<svg class="ic" style="left:992px;top:666px" width="6" height="10" viewBox="0 0 6 10"><path d="M0.6 0.8L5 4.9L0.6 9z" fill="none" stroke="#1E1E1E" stroke-width="1.2"/></svg>
<svg class="ic" style="left:1014px;top:665px" width="10" height="12" viewBox="0 0 10 12"><path d="M0.6 0.6H6.4L9.4 3.6V11.4H0.6Z" fill="#F5F5F5" stroke="#333" stroke-width="1.2"/><path d="M6 0H6.8L10 3.2V4H6Z" fill="#333"/><path d="M2.7 4H4V5.9H7V9H5.8V7H4V9H2.7Z" fill="#943F93"/></svg>
<div class="tn" style="left:1032px;top:662px">PlayerStatus.h</div>
<svg class="ic" style="left:992px;top:685px" width="6" height="10" viewBox="0 0 6 10"><path d="M0.6 0.8L5 4.9L0.6 9z" fill="none" stroke="#1E1E1E" stroke-width="1.2"/></svg>
<svg class="ic" style="left:1013px;top:686px" width="13" height="9" viewBox="0 0 13 9"><path d="M2 0H4V2H6V4H4V6H2V4H0V2H2Z" fill="#943F93"/><path d="M8 2H10V4H12V6H10V8H8V6H6V4H8Z" fill="#943F93"/></svg>
<div class="tn" style="left:1032px;top:681px">Rand.cpp</div>
<svg class="ic" style="left:992px;top:704px" width="6" height="10" viewBox="0 0 6 10"><path d="M0.6 0.8L5 4.9L0.6 9z" fill="none" stroke="#1E1E1E" stroke-width="1.2"/></svg>
<svg class="ic" style="left:1014px;top:703px" width="10" height="12" viewBox="0 0 10 12"><path d="M0.6 0.6H6.4L9.4 3.6V11.4H0.6Z" fill="#F5F5F5" stroke="#333" stroke-width="1.2"/><path d="M6 0H6.8L10 3.2V4H6Z" fill="#333"/><path d="M2.7 4H4V5.9H7V9H5.8V7H4V9H2.7Z" fill="#943F93"/></svg>
<div class="tn" style="left:1032px;top:700px">Rand.h</div>
<svg class="ic" style="left:992px;top:723px" width="6" height="10" viewBox="0 0 6 10"><path d="M0.6 0.8L5 4.9L0.6 9z" fill="none" stroke="#1E1E1E" stroke-width="1.2"/></svg>
<svg class="ic" style="left:1013px;top:724px" width="13" height="9" viewBox="0 0 13 9"><path d="M2 0H4V2H6V4H4V6H2V4H0V2H2Z" fill="#943F93"/><path d="M8 2H10V4H12V6H10V8H8V6H6V4H8Z" fill="#943F93"/></svg>
<div class="tn" style="left:1032px;top:719px">ScriptCommandStruct.cpp</div>
<svg class="ic" style="left:992px;top:742px" width="6" height="10" viewBox="0 0 6 10"><path d="M0.6 0.8L5 4.9L0.6 9z" fill="none" stroke="#1E1E1E" stroke-width="1.2"/></svg>
<svg class="ic" style="left:1014px;top:741px" width="10" height="12" viewBox="0 0 10 12"><path d="M0.6 0.6H6.4L9.4 3.6V11.4H0.6Z" fill="#F5F5F5" stroke="#333" stroke-width="1.2"/><path d="M6 0H6.8L10 3.2V4H6Z" fill="#333"/><path d="M2.7 4H4V5.9H7V9H5.8V7H4V9H2.7Z" fill="#943F93"/></svg>
<div class="tn" style="left:1032px;top:738px">ScriptCommandStruct.h</div>
<svg class="ic" style="left:992px;top:761px" width="6" height="10" viewBox="0 0 6 10"><path d="M0.6 0.8L5 4.9L0.6 9z" fill="none" stroke="#1E1E1E" stroke-width="1.2"/></svg>
<svg class="ic" style="left:1014px;top:760px" width="10" height="12" viewBox="0 0 10 12"><path d="M0.6 0.6H6.4L9.4 3.6V11.4H0.6Z" fill="#F5F5F5" stroke="#333" stroke-width="1.2"/><path d="M6 0H6.8L10 3.2V4H6Z" fill="#333"/><path d="M2.7 4H4V5.9H7V9H5.8V7H4V9H2.7Z" fill="#943F93"/></svg>
<div class="tn" style="left:1032px;top:757px">Type.h</div>
<svg class="ic" style="left:974px;top:780px" width="6" height="10" viewBox="0 0 6 10"><path d="M0.6 0.8L5 4.9L0.6 9z" fill="none" stroke="#1E1E1E" stroke-width="1.2"/></svg>
<svg class="ic" style="left:994px;top:779px" width="15" height="13" viewBox="0 0 15 13"><path d="M1 3H5.2L6 1H14V12H4.3V8H1Z" fill="#DCB67A"/><path d="M7 2H13V3H7Z" fill="#F3E9D6"/><path d="M0 9H5.2V10L3.3 11.6V13H1.9V11.6L0 10Z" fill="#2D2D2D"/></svg>
<div class="tn" style="left:1014px;top:776px">Main</div>
<svg class="ic" style="left:974px;top:799px" width="6" height="10" viewBox="0 0 6 10"><path d="M0.6 0.8L5 4.9L0.6 9z" fill="none" stroke="#1E1E1E" stroke-width="1.2"/></svg>
<svg class="ic" style="left:994px;top:798px" width="15" height="13" viewBox="0 0 15 13"><path d="M1 3H5.2L6 1H14V12H4.3V8H1Z" fill="#DCB67A"/><path d="M7 2H13V3H7Z" fill="#F3E9D6"/><path d="M0 9H5.2V10L3.3 11.6V13H1.9V11.6L0 10Z" fill="#2D2D2D"/></svg>
<div class="tn" style="left:1014px;top:795px">Packets</div>
<svg class="ic" style="left:974px;top:818px" width="6" height="10" viewBox="0 0 6 10"><path d="M0.6 0.8L5 4.9L0.6 9z" fill="none" stroke="#1E1E1E" stroke-width="1.2"/></svg>
<svg class="ic" style="left:994px;top:817px" width="15" height="13" viewBox="0 0 15 13"><path d="M1 3H5.2L6 1H14V12H4.3V8H1Z" fill="#DCB67A"/><path d="M7 2H13V3H7Z" fill="#F3E9D6"/><path d="M0 9H5.2V10L3.3 11.6V13H1.9V11.6L0 10Z" fill="#2D2D2D"/></svg>
<div class="tn" style="left:1014px;top:814px">StdAfx</div>
<svg class="ic" style="left:956px;top:837px" width="6" height="10" viewBox="0 0 6 10"><path d="M0.6 0.8L5 4.9L0.6 9z" fill="none" stroke="#1E1E1E" stroke-width="1.2"/></svg>
<svg class="ic" style="left:976px;top:836px" width="15" height="12" viewBox="0 0 15 12"><path d="M1.5 2H13.5V12H1.5Z" fill="#EEEEEE"/><path d="M0.5 12V0.5H13.5V12" fill="none" stroke="#9B4F96" stroke-width="1"/><path d="M4.4 1.2H6.4V3H8.3V5H6.4V6.8H4.4V5H2.5V3H4.4Z" fill="#2D2D2D"/><path d="M8.2 5.2H10.2V7H12V9H10.2V10.8H8.2V9H6.4V7H8.2Z" fill="#2D2D2D"/></svg>
<div class="tn" style="left:996px;top:833px">GameServer</div>
</div>
</div>
<!-- tabs -->
<div class="abs" style="left:945px;top:846px;width:296px;height:22px;background:#EEEEF2"></div>
<div class="abs" style="left:945px;top:846px;width:119px;height:22px;background:#F5F5F5;border-right:1px solid #CCCEDB;border-bottom:1px solid #CCCEDB"></div>
<div class="abs" style="left:950px;top:849px;font-size:12px;line-height:16px;color:#0E70C0;white-space:pre">解决方案资源管理器</div>
<div class="abs" style="left:1070px;top:849px;font-size:12px;line-height:16px;color:#1E1E1E;white-space:pre">团队资源管理器</div>
<div class="abs" style="left:1166px;top:849px;font-size:12px;line-height:16px;color:#1E1E1E;white-space:pre">资源视图</div>
<div class="abs" style="left:1226px;top:849px;font-size:12px;line-height:16px;color:#1E1E1E;white-space:pre">通知</div>
</body></html>
